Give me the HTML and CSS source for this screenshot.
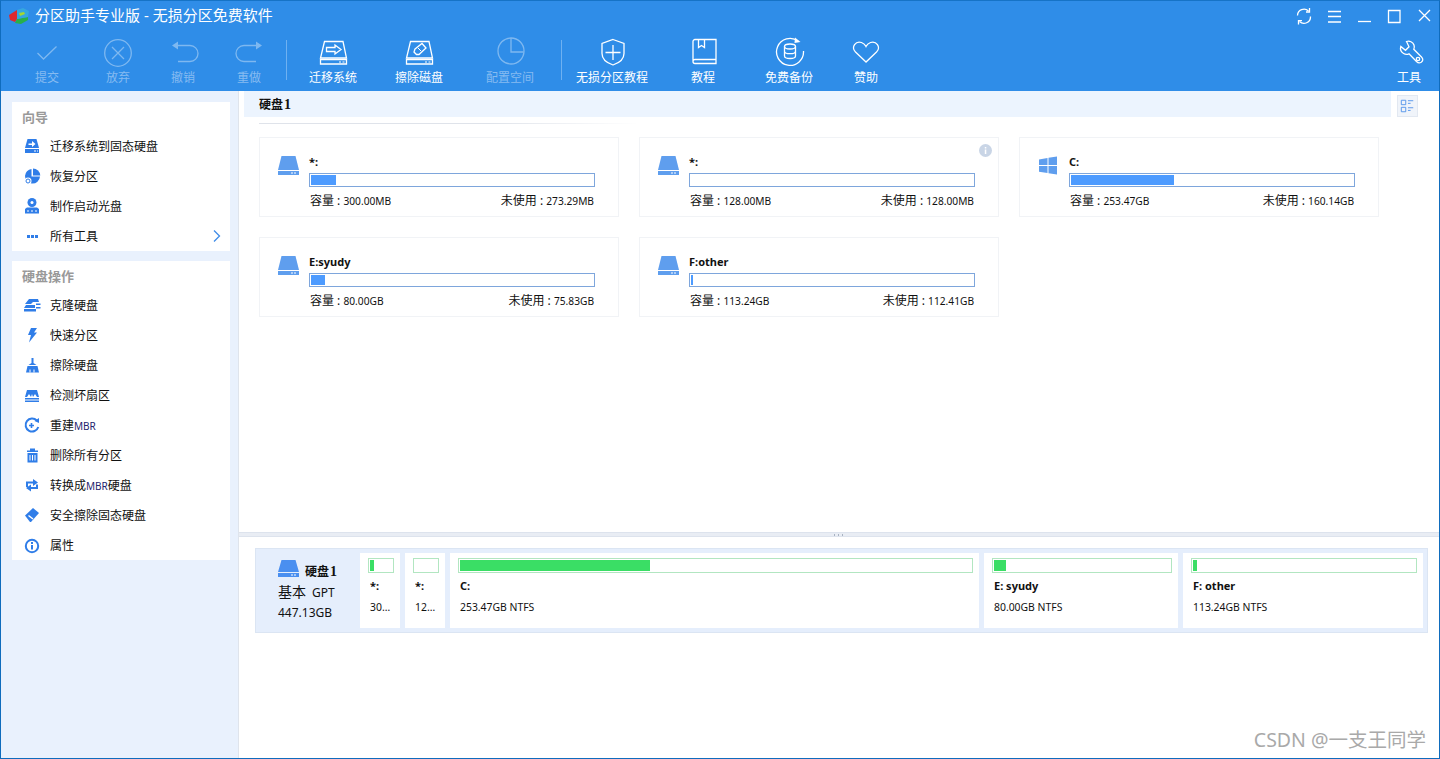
FILE: index.html
```html
<!DOCTYPE html>
<html lang="zh-CN">
<head>
<meta charset="utf-8">
<title>分区助手专业版</title>
<link rel="stylesheet" href="styles.css">
</head>
<body>
<div class="window">
  <header class="titlebar">
    <svg class="logo" width="22" height="18" viewBox="0 0 22 18">
      <path d="M1 8 9 3v9l-2 3-5-2z" fill="#e0282c"/>
      <path d="M9 12l11-2v3l-7 4-6-1z" fill="#27b04a"/>
      <path d="M9 3 15 1l6 3-1 6-11 2z" fill="#35a7df"/>
      <path d="M11 6l5-1 1 2-5 2z" fill="#a5d82e"/>
    </svg>
    <h1 class="title">分区助手专业版 - 无损分区免费软件</h1>
    <div class="wincontrols">
      <svg width="30" height="31" viewBox="0 0 30 31" class="wc"><path d="M8.500 14.500a6.500 6.500 0 0 1 11-4.500M21.500 15.500a6.500 6.500 0 0 1-11 5"/><path d="M20.500 7v4h-3.500M9.500 23.500v-3.800H13"/></svg>
      <svg width="30" height="31" viewBox="0 0 30 31" class="wc"><path d="M9 10.500h13M9 15.500h13M9 21h13"/></svg>
      <svg width="30" height="31" viewBox="0 0 30 31" class="wc"><path d="M9 20.500h13"/></svg>
      <svg width="30" height="31" viewBox="0 0 30 31" class="wc"><path d="M9.500 9.500h11.500v12h-11.500z"/></svg>
      <svg width="30" height="31" viewBox="0 0 30 31" class="wc"><path d="M10 9l11 11M21 9 10 20"/></svg>
    </div>
  </header>

  <nav class="toolbar">
    <div class="tool off t-submit"><svg width="32" height="30" viewBox="0 0 32 30"><path d="M6.500 16l6 6L25.500 9.500"/></svg><span>提交</span></div>
    <div class="tool off t-abandon"><svg width="32" height="30" viewBox="0 0 32 30"><circle cx="16" cy="16" r="13.300"/><path d="M10 10l12 12M22 10 10 22"/></svg><span>放弃</span></div>
    <div class="tool off t-undo"><svg width="32" height="30" viewBox="0 0 32 30"><path d="M7 8.500h16a8 8 0 0 1 0 16H11"/><path d="M11 4.500v8L5 8.500z" class="solid"/></svg><span>撤销</span></div>
    <div class="tool off t-redo"><svg width="32" height="30" viewBox="0 0 32 30"><path d="M27 8.500H11a8 8 0 0 0 0 16h12"/><path d="M23 4.500v8l6-4z" class="solid"/></svg><span>重做</span></div>
    <div class="tsep s1"></div>
    <div class="tool t-migrate"><svg width="32" height="30" viewBox="0 0 32 30"><path d="M7.500 4.500h18.500L29.500 21h-26z"/><path d="M3.500 22.500h26v4.500h-26z"/><path d="M22 25h2M25.500 25h2" stroke-width="1"/><path d="M9.500 10.500h8.500v-2.500l6 4.500-6 4.500v-2.500H9.500z"/></svg><span>迁移系统</span></div>
    <div class="tool t-wipe"><svg width="32" height="30" viewBox="0 0 32 30"><path d="M7.500 4.500h18.500L29.500 21h-26z"/><path d="M3.500 22.500h26v4.500h-26z"/><path d="M22 25h2M25.500 25h2" stroke-width="1"/><path d="M12 12l7-5.500 4 4.500-7 6.500h-2.500l-2.500-2.500z"/><path d="M15 11l3 3" stroke-width="1"/></svg><span>擦除磁盘</span></div>
    <div class="tool off t-space"><svg width="32" height="30" viewBox="0 0 32 30"><circle cx="17" cy="14" r="13"/><path d="M17 1v14h12.500"/></svg><span>配置空间</span></div>
    <div class="tsep s2"></div>
    <div class="tool wide t-tutorial"><svg width="32" height="30" viewBox="0 0 32 30"><path d="M17 2.500l11 4v10c0 6-5 9.500-11 11.500-6-2-11-5.500-11-11.500v-10z"/><path d="M17 8v15M9.500 15.500h15"/></svg><span>无损分区教程</span></div>
    <div class="tool t-book"><svg width="32" height="30" viewBox="0 0 32 30"><path d="M29 22.500v-20H8a2 2 0 0 0-2 2v20a2 2 0 0 0 2 2h21v-4H8a2 2 0 0 0-2 2"/><path d="M11.500 3v7.500l3-2 3 2V3"/></svg><span>教程</span></div>
    <div class="tool t-backup"><svg width="32" height="30" viewBox="0 0 32 30"><path d="M25 4a13.500 13.500 0 1 0 5.500 10"/><path d="M22 .5l5.500 4.500-6 1z" class="solid"/><ellipse cx="17" cy="9.500" rx="5.500" ry="2.500"/><path d="M11.500 9.500v9.500c0 1.500 2.500 2.500 5.500 2.500s5.500-1 5.500-2.500V9.500M11.500 14.200c0 1.500 2.500 2.500 5.500 2.500s5.500-1 5.500-2.500"/></svg><span>免费备份</span></div>
    <div class="tool t-heart"><svg width="32" height="30" viewBox="0 0 32 30"><path d="M16 25 5.500 15c-5-5 .5-11.500 6-9.500 2 .8 3.500 2 4.500 4 1-2 2.500-3.200 4.500-4 5.500-2 11 4.500 6 9.500z"/></svg><span>赞助</span></div>
    <div class="tool t-tools"><svg width="32" height="30" viewBox="0 0 32 30"><path d="M13.500 4.500c3-1 6.500.5 7.500 3.500.5 1.500.4 3-.2 4.300L28.500 20c2 2 1.500 4-.3 5.300-1.500 1-3.300.7-4.700-.8l-7.500-7.700c-1.800.8-3.800.7-5.400-.3-2.500-1.500-3.500-4.500-2.800-7l4.700 3.800 3.500-3.500z"/><circle cx="25" cy="22" r="1.700"/></svg><span>工具</span></div>
  </nav>

  <div class="body">
    <aside class="sidebar">
      <section class="panel">
        <h2 class="panel-head">向导</h2>
        <div class="row"><svg width="20" height="20" viewBox="0 0 20 20"><path d="M5.500 3h9L17 12H3z"/><path d="M3 13h14v4H3z"/><path d="M6.500 7.500h3.500V5l3.500 3-3.500 3V9H6.500z" fill="#fff"/><path d="M12 15h2M15 15h1" stroke="#fff"/></svg><span>迁移系统到固态硬盘</span></div>
        <div class="row"><svg width="20" height="20" viewBox="0 0 20 20"><path d="M11 2.500a7.500 7.500 0 0 1 7.300 7H11z"/><path d="M9.500 3v7.500H18a7.500 7.500 0 0 1-8 7 7.500 7.500 0 0 1-7-7.500 7.500 7.500 0 0 1 6.500-7z"/><circle cx="6" cy="15" r="3.500" fill="#fff"/><circle cx="6" cy="15" r="2" fill="none" stroke="#2f7de8"/></svg><span>恢复分区</span></div>
        <div class="row"><svg width="20" height="20" viewBox="0 0 20 20"><circle cx="10" cy="6.500" r="4.500"/><circle cx="10" cy="6.500" r="1.500" fill="#fff"/><path d="M5 11.500h10l2 1.500v4.500H3V13z"/><path d="M5 15h2M9 15h2M13 15h2" stroke="#fff"/></svg><span>制作启动光盘</span></div>
        <div class="row"><svg width="20" height="20" viewBox="0 0 20 20"><path d="M5 9h3v3H5zM9 9h3v3H9zM13 9h3v3h-3z"/></svg><span>所有工具</span><svg class="chev" width="10" height="14" viewBox="0 0 10 14"><path d="M2 1.500 7.500 7 2 12.500" fill="none" stroke="#3f8ce8" stroke-width="1.300"/></svg></div>
      </section>
      <section class="panel">
        <h2 class="panel-head">硬盘操作</h2>
        <div class="row"><svg width="20" height="20" viewBox="0 0 20 20"><path d="M7 4h9l1 3H11L9 9H3z"/><path d="M2 13l2-3h9v3zM2 14h12v2.500H2zM14 8.500h4.500V10H14zM14 12h4.500v1.500H14z"/></svg><span>克隆硬盘</span></div>
        <div class="row"><svg width="20" height="20" viewBox="0 0 20 20"><path d="M9 3h6l-3 4.500h3L7 17.500l2-7.500H6z"/></svg><span>快速分区</span></div>
        <div class="row"><svg width="20" height="20" viewBox="0 0 20 20"><path d="M9.500 3h2v5l3 2H6.500l3-2zM5.500 11h10l1.500 6.500H4z"/><path d="M8 14.500v3M12 14.500v3" stroke="#fff"/></svg><span>擦除硬盘</span></div>
        <div class="row"><svg width="20" height="20" viewBox="0 0 20 20"><path d="M3 12l2-7h10l2 7h-2l-2-3-2 3-1-3-1 3-2-3-2 3z"/><path d="M3 13h14v1.500H3zM3 15.500h14V17H3z"/></svg><span>检测坏扇区</span></div>
        <div class="row"><svg width="20" height="20" viewBox="0 0 20 20"><path d="M14.800 5.500a6.500 6.500 0 1 0 1.500 6.500" fill="none" stroke="#2f7de8" stroke-width="2"/><path d="M12.500 6l4.500-3v5z"/><path d="M9.500 8v5M7 10.500h5" stroke="#2f7de8" stroke-width="1.600"/></svg><span>重建<b class="en">MBR</b></span></div>
        <div class="row"><svg width="20" height="20" viewBox="0 0 20 20"><path d="M5 5.500h11v1.500H5zM8 3.500h5v2H8zM5.500 8h10v9.500h-10z"/><path d="M8 10v5.500M10.500 10v5.500M13 10v5.500" stroke="#fff"/></svg><span>删除所有分区</span></div>
        <div class="row"><svg width="20" height="20" viewBox="0 0 20 20"><path d="M4 12V6.500h7V4l5 3.500-5 3.500V8.500H6V12z"/><path d="M16 9.500V14H9v2.500L4 13l5-3.500V12h5V9.500z"/></svg><span>转换成<b class="en">MBR</b>硬盘</span></div>
        <div class="row"><svg width="20" height="20" viewBox="0 0 20 20"><path d="M3 10.500 11 3l6 5-8 9H8z"/><path d="M6.500 10.500l4.500 3.500" stroke="#fff" stroke-width="1.500"/></svg><span>安全擦除固态硬盘</span></div>
        <div class="row"><svg width="20" height="20" viewBox="0 0 20 20"><circle cx="10" cy="11" r="6.200" fill="none" stroke="#2f7de8" stroke-width="2"/><path d="M9 7h2v2H9zM9 10h2v4.500H9z"/></svg><span>属性</span></div>
      </section>
    </aside>

    <main class="main">
      <div class="upper">
        <div class="strip-row">
          <div class="strip">硬盘<b class="num">1</b></div>
          <button class="viewbtn" type="button"><svg width="17" height="16" viewBox="0 0 17 16"><path d="M1.500 1.500h5v5h-5zM1.500 9.500h5v5h-5z"/><path d="M9 2h6M9 5h3M9 10h6M9 13h3"/></svg></button>
        </div>
        <div class="rule"></div>
        <div class="cards">
          <article class="card">
            <svg class="disk" width="21" height="19" viewBox="0 0 21 19"><path d="M3.500 0h14l3.500 14H0zM0 15h21v4H0z"/><path d="M13 17h2M16 17h2" stroke="#fff"/></svg>
            <div class="info"><div class="name">*:</div><div class="bar"><i style="width:25px"></i></div><div class="stat"><span>容量 : <b class="v">300.00MB</b></span><span>未使用 : <b class="v">273.29MB</b></span></div></div>
          </article>
          <article class="card">
            <svg class="disk" width="21" height="19" viewBox="0 0 21 19"><path d="M3.500 0h14l3.500 14H0zM0 15h21v4H0z"/><path d="M13 17h2M16 17h2" stroke="#fff"/></svg>
            <div class="info"><div class="name">*:</div><div class="bar"></div><div class="stat"><span>容量 : <b class="v">128.00MB</b></span><span>未使用 : <b class="v">128.00MB</b></span></div></div>
            <svg class="badge" width="13" height="13" viewBox="0 0 13 13"><circle cx="6.500" cy="6.500" r="6.500" fill="#c9d5e6"/><path d="M5.800 3h1.500v1.500H5.800zM5.800 5.500h1.500V10H5.800z" fill="#fff"/></svg>
          </article>
          <article class="card">
            <svg class="disk" width="21" height="19" viewBox="0 0 21 19"><path d="M1 3.500 9.500 2v7H1zM10.500 1.800 19 .5V9h-8.500zM1 10h8.500v7L1 15.800zM10.500 10H19v8.500l-8.500-1.300z"/></svg>
            <div class="info"><div class="name">C:</div><div class="bar"><i style="width:103px"></i></div><div class="stat"><span>容量 : <b class="v">253.47GB</b></span><span>未使用 : <b class="v">160.14GB</b></span></div></div>
          </article>
          <article class="card">
            <svg class="disk" width="21" height="19" viewBox="0 0 21 19"><path d="M3.500 0h14l3.500 14H0zM0 15h21v4H0z"/><path d="M13 17h2M16 17h2" stroke="#fff"/></svg>
            <div class="info"><div class="name">E:syudy</div><div class="bar"><i style="width:14px"></i></div><div class="stat"><span>容量 : <b class="v">80.00GB</b></span><span>未使用 : <b class="v">75.83GB</b></span></div></div>
          </article>
          <article class="card">
            <svg class="disk" width="21" height="19" viewBox="0 0 21 19"><path d="M3.500 0h14l3.500 14H0zM0 15h21v4H0z"/><path d="M13 17h2M16 17h2" stroke="#fff"/></svg>
            <div class="info"><div class="name">F:other</div><div class="bar"><i style="width:2px"></i></div><div class="stat"><span>容量 : <b class="v">113.24GB</b></span><span>未使用 : <b class="v">112.41GB</b></span></div></div>
          </article>
        </div>
      </div>
      <div class="splitter"><span class="grip"></span></div>
      <div class="lower">
        <div class="diskmap">
          <div class="diskinfo">
            <div class="dtitle"><svg width="21" height="17" viewBox="0 0 21 17"><path d="M3.500 0h14l3.500 12H0zM0 13h21v4H0z"/><path d="M13 15h2M16 15h2" stroke="#fff"/></svg><strong>硬盘<b class="num">1</b></strong></div>
            <div class="dtype"><span class="cn">基本</span> GPT</div>
            <div class="dsize">447.13GB</div>
          </div>
          <div class="part" style="width:40px"><div class="gbar"><i style="width:4px"></i></div><div class="pname">*:</div><div class="psize">30…</div></div>
          <div class="part" style="width:40px"><div class="gbar"></div><div class="pname">*:</div><div class="psize">12…</div></div>
          <div class="part" style="width:529px"><div class="gbar"><i style="width:190px"></i></div><div class="pname">C:</div><div class="psize">253.47GB NTFS</div></div>
          <div class="part" style="width:194px"><div class="gbar"><i style="width:12px"></i></div><div class="pname">E: syudy</div><div class="psize">80.00GB NTFS</div></div>
          <div class="part" style="width:240px"><div class="gbar"><i style="width:4px"></i></div><div class="pname">F: other</div><div class="psize">113.24GB NTFS</div></div>
        </div>
      </div>
    </main>
  </div>
  <div class="watermark">CSDN @一支王同学</div>
</div>
</body>
</html>
```

FILE: styles.css
```css
* { box-sizing: border-box; }
html, body { margin: 0; padding: 0; height: 100%; overflow: hidden; }
body { font-family: "Noto Sans", "Noto Sans CJK SC", sans-serif; font-size: 12px; color: #111; background: #fff; }
.window { position: relative; width: 1440px; height: 759px; display: flex; flex-direction: column; border: 1px solid #0f6cbd; border-top-color: #1673c6; background: #fff; }

.titlebar { height: 30px; flex: none; display: flex; align-items: center; background: #2f8de8; color: #fff; padding-left: 7px; }
.logo { flex: none; }
.title { margin: 0 0 2px 5px; font-size: 15px; font-weight: 400; line-height: 20px; white-space: nowrap; }
.wincontrols { margin-left: auto; display: flex; }
.wc { fill: none; stroke: #fff; stroke-width: 1.300; }

.toolbar { height: 60px; flex: none; display: flex; background: #2f8de8; color: #fff; }
.tool { width: 60px; flex: none; display: flex; flex-direction: column; align-items: center; padding-top: 6px; }
.tool svg { fill: none; stroke: #fff; stroke-width: 1.300; display: block; }
.tool .solid { fill: #fff; stroke: none; }
.tool span { line-height: 16px; margin-top: 3px; white-space: nowrap; }
.tool.off svg { opacity: .38; }
.tool.off span { color: #86bbf1; }
.tool.wide { width: 72px; }
.t-submit { margin-left: 16px; }
.t-abandon { margin-left: 11px; }
.t-undo { margin-left: 5px; }
.t-redo { margin-left: 6px; }
.tsep { width: 1px; height: 40px; margin-top: 9px; flex: none; background: #6fb1f1; }
.s1 { margin-left: 7px; }
.t-migrate { margin-left: 16px; }
.t-wipe { margin-left: 26px; }
.t-space { margin-left: 31px; }
.s2 { margin-left: 21px; }
.t-tutorial { margin-left: 14px; }
.t-book { margin-left: 25px; }
.t-backup { margin-left: 26px; }
.t-heart { margin-left: 17px; }
.t-tools { margin-left: auto; }

.body { flex: 1; display: flex; min-height: 0; }
.sidebar { width: 238px; flex: none; background: #e9f1fd; border-right: 1px solid #dfe4ec; padding: 11px 8px 0 11px; display: flex; flex-direction: column; gap: 10px; }
.panel { background: #fff; }
.panel-head { margin: 0; height: 29px; padding-left: 10px; font-size: 13px; font-weight: 700; line-height: 30px; color: #999; }
.row { height: 30px; display: flex; align-items: center; padding-left: 10px; gap: 8px; font-size: 12px; color: #111; }
.row > svg:first-child { flex: none; fill: #2f7de8; }
.row .chev { margin-left: auto; margin-right: 8px; }
.en { font-weight: 400; font-size: 10px; color: #24246e; }

.main { flex: 1; min-width: 0; display: flex; flex-direction: column; }
.upper { height: 441px; flex: none; }
.strip-row { display: flex; padding-left: 5px; height: 26px; }
.strip { flex: 1; background: #ecf4fe; padding-left: 15px; font-weight: 700; font-size: 12px; line-height: 28px; color: #111; }
.num { font-family: "Liberation Serif", serif; font-weight: 700; font-size: 14px; margin-left: 1px; }
.viewbtn { width: 21px; height: 22px; margin: 4px 21px 0 6px; padding: 2px; background: #f0f4fa; border: 1px solid #e2e8f1; display: flex; align-items: center; justify-content: center; }
.viewbtn svg { fill: none; stroke: #4c8fe9; stroke-width: 1; display: block; }
.rule { height: 1px; width: 380px; margin: 6px 0 0 20px; background: linear-gradient(90deg, #dfe3ea 0, #dfe3ea 60%, #fff 100%); }
.cards { display: grid; grid-template-columns: repeat(3, 360px); grid-auto-rows: 80px; gap: 20px; margin: 13px 0 0 20px; }
.card { position: relative; border: 1px solid #f1f3f6; display: flex; padding: 17px 23px 0 18px; gap: 10px; }
.disk { flex: none; fill: #5f9eee; margin-top: 1px; }
.info { flex: 1; min-width: 0; }
.name { height: 14px; line-height: 13px; font-weight: 700; font-size: 11px; color: #111; }
.bar { height: 14px; margin-top: 4px; border: 1px solid #7ea6dc; padding: 1px; background: #fff; }
.bar i { display: block; height: 100%; background: #4d9bff; }
.stat { display: flex; justify-content: space-between; line-height: 18px; margin: 5px 1px 0 1px; font-size: 12px; color: #111; }
.v { font-weight: 400; font-size: 10.200px; }
.badge { position: absolute; right: 6px; top: 6px; }

.splitter { height: 5px; flex: none; background: #e9edf4; border-top: 1px solid #dde3ed; border-bottom: 1px solid #dde3ed; display: flex; justify-content: center; }
.grip { width: 11px; height: 2px; margin-top: 1px; background: repeating-linear-gradient(90deg, #a9b3c2 0 1px, transparent 1px 4px); }
.lower { flex: 1; padding: 11px 11px 0 16px; }
.diskmap { height: 85px; display: flex; gap: 5px; padding: 4px; background: #e5eefc; border: 1px solid #dbe5f3; }
.diskinfo { width: 95px; flex: none; padding: 6px 0 0 18px; line-height: 18px; }
.dtitle { display: flex; align-items: flex-end; gap: 6px; height: 18px; }
.dtitle svg { flex: none; fill: #4a8ff0; }
.dtitle strong { font-size: 12px; line-height: 14px; margin-bottom: -2px; white-space: nowrap; }
.dtype { margin-top: 6px; font-size: 12px; white-space: nowrap; }
.dtype .cn { font-size: 14px; margin-right: 3px; }
.dsize { margin-top: 2px; font-size: 12px; }
.part { background: #fff; padding: 5px 6px 0 8px; flex: none; min-width: 0; }
.gbar { height: 15px; border: 1px solid #b2e6c1; padding: 1px; background: #fff; }
.gbar i { display: block; height: 100%; background: #3ade65; }
.pname { margin: 6px 0 0 2px; font-weight: 700; font-size: 11px; line-height: 14px; white-space: nowrap; overflow: hidden; }
.psize { margin: 7px 0 0 2px; font-size: 10.400px; line-height: 14px; white-space: nowrap; }

.watermark { position: absolute; right: 13px; bottom: 4px; font-size: 19.500px; line-height: 28px; color: #a9a9a9; white-space: nowrap; }
```
